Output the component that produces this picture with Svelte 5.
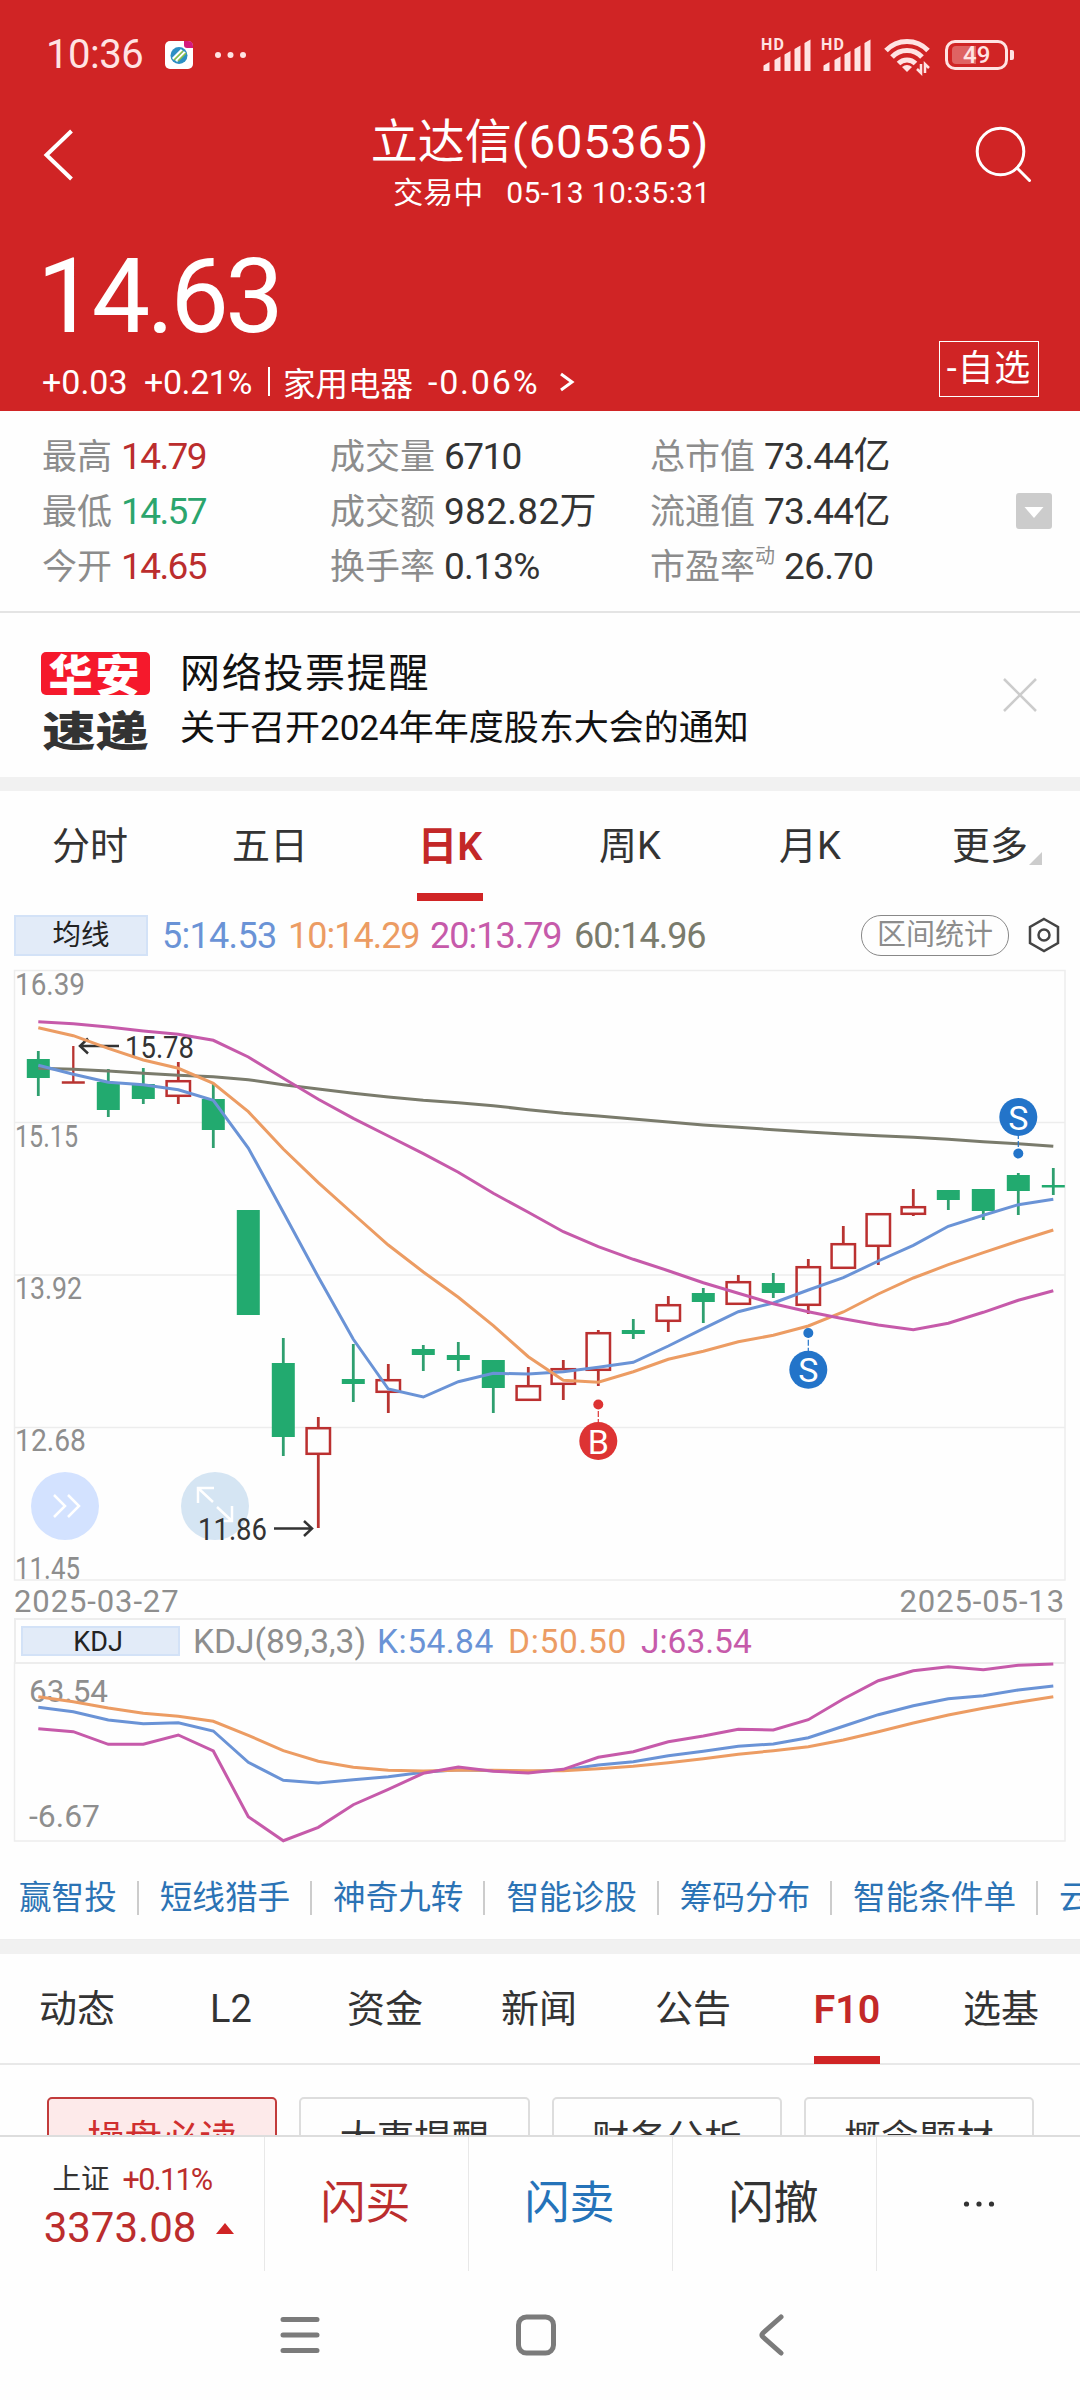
<script lang="ts">
	type Candle = [kind: 'up' | 'down', high: number, top: number, bottom: number, low: number];

	const STEP = 35;
	const FIRST = 38.3;
	const x = (i: number) => FIRST + i * STEP;

	const stats = [
		[
			{ label: '最高', value: '14.79', tone: 'red' },
			{ label: '最低', value: '14.57', tone: 'green' },
			{ label: '今开', value: '14.65', tone: 'red' }
		],
		[
			{ label: '成交量', value: '6710', tone: 'tight' },
			{ label: '成交额', value: '982.82万', tone: 'loose' },
			{ label: '换手率', value: '0.13%' }
		],
		[
			{ label: '总市值', value: '73.44亿' },
			{ label: '流通值', value: '73.44亿' },
			{ label: '市盈率', sup: '动', value: '26.70' }
		]
	];

	const periods = ['分时', '五日', '日K', '周K', '月K', '更多'];
	const tools = ['赢智投', '短线猎手', '神奇九转', '智能诊股', '筹码分布', '智能条件单', '云'];
	const sections = ['动态', 'L2', '资金', '新闻', '公告', 'F10', '选基'];
	const chips = ['操盘必读', '大事提醒', '财务分析', '概念题材'];

	const candles: Candle[] = [
		['down', 1051, 1059, 1078, 1096],
		['up', 1046, 1081, 1083.5, 1083],
		['down', 1069, 1082, 1110, 1117],
		['down', 1068, 1084, 1099, 1104],
		['up', 1062, 1080, 1097, 1104],
		['down', 1083, 1099, 1130, 1148],
		['down', 1210, 1210, 1315, 1315],
		['down', 1338, 1363, 1437, 1456],
		['up', 1417, 1427, 1455, 1528],
		['down', 1344, 1379, 1384, 1402],
		['up', 1364, 1379, 1393, 1413],
		['down', 1345, 1349, 1355, 1371],
		['down', 1342, 1355, 1360, 1371],
		['down', 1360, 1360, 1388, 1413],
		['up', 1367, 1385, 1401, 1401],
		['up', 1360, 1368, 1385, 1400],
		['up', 1330, 1332, 1371, 1386],
		['down', 1319, 1330, 1334, 1339],
		['up', 1296, 1304, 1322, 1332],
		['down', 1288, 1293, 1302, 1323],
		['up', 1275, 1281, 1305, 1305],
		['down', 1273, 1283, 1293, 1298],
		['up', 1259, 1266, 1306, 1314],
		['up', 1226, 1243, 1269, 1269],
		['up', 1213, 1213, 1247, 1265],
		['up', 1189, 1206, 1215, 1216],
		['down', 1190, 1190, 1200, 1210],
		['down', 1189, 1189, 1211, 1220],
		['down', 1173, 1175, 1191, 1215],
		['down', 1168, 1185, 1187.5, 1195]
	];

	const averages = [
		{
			color: '#7a7b6c',
			ys: [1068.3, 1069.3, 1071, 1073.3, 1075.3, 1076.7, 1079.7, 1084.7, 1089, 1093.3, 1097, 1100.3, 1102.7, 1105.7, 1109.7, 1113.3, 1116, 1119, 1122, 1125, 1127.3, 1129.7, 1132, 1134, 1135.7, 1137.3, 1139.3, 1141.7, 1143.7, 1146.3]
		},
		{
			color: '#6a93d6',
			ys: [1065.3, 1074.3, 1082.3, 1084.7, 1089.7, 1100.3, 1148, 1212.3, 1277, 1339.3, 1389, 1397, 1381.7, 1373.3, 1374, 1371.7, 1367.3, 1362.3, 1346, 1328.7, 1311.7, 1303, 1290, 1277.7, 1261, 1245.3, 1226.3, 1215.3, 1204.7, 1199.3]
		},
		{
			color: '#ec9c63',
			ys: [1027.7, 1035.7, 1048.3, 1060, 1068.3, 1083.3, 1111.7, 1149, 1182.7, 1214, 1245, 1272, 1297.3, 1325.7, 1356.7, 1380.3, 1382.3, 1371.7, 1359.3, 1351.3, 1341.7, 1335.3, 1326, 1312, 1294, 1278, 1264.7, 1252.7, 1241, 1230]
		},
		{
			color: '#c65aaa',
			ys: [1021.7, 1023.7, 1027, 1031, 1034.3, 1040.3, 1057, 1078.3, 1099.3, 1118.3, 1136, 1153.7, 1172.3, 1193.3, 1212.3, 1231.7, 1246.7, 1259.3, 1270.7, 1282.7, 1293.3, 1303.7, 1311.7, 1318.7, 1325, 1329.7, 1323.3, 1312.3, 1300.3, 1290.7]
		}
	];

	const kdj = [
		{
			color: '#6a93d6',
			ys: [1707.3, 1711.7, 1720, 1723.7, 1722.7, 1731, 1762.3, 1780.3, 1783, 1779.7, 1776.7, 1772.3, 1769.7, 1770.7, 1771.7, 1770, 1765, 1761.7, 1755.7, 1751.3, 1746.3, 1744, 1737.7, 1726.3, 1714.7, 1705.7, 1698.7, 1695.7, 1690, 1686]
		},
		{
			color: '#ec9c63',
			ys: [1696.7, 1701.7, 1708, 1713.3, 1716.3, 1721.3, 1735.3, 1750.7, 1761.3, 1767.3, 1770.3, 1771, 1770.3, 1770.3, 1770.7, 1770.7, 1768.7, 1766.3, 1762.7, 1758.7, 1754.3, 1750.7, 1746.7, 1740, 1731.7, 1723, 1715, 1708.3, 1702.3, 1696.7]
		},
		{
			color: '#c65aaa',
			ys: [1728.7, 1731.7, 1744.3, 1744.3, 1735, 1751, 1816.7, 1840.7, 1827.3, 1804.7, 1789.3, 1773.3, 1767, 1771.3, 1773, 1769.3, 1757.3, 1751.7, 1741.7, 1736, 1729.3, 1730, 1719.7, 1699, 1680.7, 1670.7, 1666.7, 1669.7, 1665.3, 1664]
		}
	];

	const prices: [string, number, number][] = [
		['16.39', 995, 70],
		['15.15', 1147, 63],
		['13.92', 1299, 67],
		['12.68', 1451, 71],
		['11.45', 1578.5, 65]
	];

	const marks = [
		{ letter: 'S', i: 28, y: 1117, dot: 1153.5, color: '#2374c9' },
		{ letter: 'S', i: 22, y: 1369.7, dot: 1333, color: '#2374c9' },
		{ letter: 'B', i: 16, y: 1441, dot: 1404.5, color: '#dd3333' }
	];

	const points = (ys: number[]) => ys.map((y, i) => `${x(i)},${y}`).join(' ');
</script>

<div class="page">
	<div class="scroll">
		<header class="hero">
			<div class="status">
				<span class="clock">10:36</span>
				<svg class="app-icon" viewBox="0 0 28 28" width="28" height="28">
					<rect width="28" height="28" rx="5" fill="#fff" />
					<circle cx="14" cy="14.500" r="8.500" fill="#2d8fc4" />
					<path d="M8 18l9-9M11 20l9-9" stroke="#fff" stroke-width="3" />
					<path d="M9 19l9-9M13 20l8-8" stroke="#8cc04a" stroke-width="1.600" />
					<path d="M19 0h4q5 0 5 5v2h-6q-3 0-3-3z" fill="#d6197c" />
				</svg>
				<svg class="more-dots" viewBox="0 0 34 8" width="34" height="8" fill="#ffe3e3">
					<circle cx="4" cy="4" r="3" /><circle cx="16.500" cy="4" r="3" /><circle cx="29" cy="4" r="3" />
				</svg>
				<div class="signals">
					{#each [0, 1] as sim (sim)}
						<svg viewBox="0 0 50 36" width="50" height="36" fill="#ffe3e3">
							<text x="0" y="13" class="hd" textLength="23">HD</text>
							<path d="M2.500 28.500l6-3.500v9h-6zM13.500 23l6-3.500v14.500h-6zM23.500 17.500l6-3.500v20h-6zM33.500 12l6-3.500v25.500h-6zM43.500 6l6-3.500v31.500h-6z" />
						</svg>
					{/each}
				</div>
				<svg class="wifi" viewBox="0 0 46 36" width="46" height="36" fill="none" stroke="#ffe3e3" stroke-width="5">
					<path d="M2 13.500A29 29 0 0 1 44 13.500" />
					<path d="M8 20A20.500 20.500 0 0 1 38 20" />
					<path d="M14.500 26.500A12 12 0 0 1 31.500 26.500" />
					<path d="M18 30q5-4 10 0l-5 5z" fill="#ffe3e3" stroke="none" />
					<path d="M37 27v9l-4-4M41 36v-9l4 4" stroke-width="2.500" />
				</svg>
				<div class="battery"><span class="level"></span><span class="percent">49</span></div>
				<span class="nub"></span>
			</div>

			<div class="title-bar">
				<svg viewBox="0 0 31 52" width="31" height="52" fill="none" stroke="#fff" stroke-width="4">
					<path d="M28.500 2L3.500 26l25 24" />
				</svg>
				<div class="titles">
					<h1>立达信<span>(605365)</span></h1>
					<p><span>交易中</span><span>05-13 10:35:31</span></p>
				</div>
				<svg viewBox="0 0 58 58" width="58" height="58" fill="none" stroke="#fff" stroke-width="3">
					<circle cx="25.500" cy="25.500" r="23.300" /><path d="M42 42l12.500 12.500" stroke-linecap="round" />
				</svg>
			</div>

			<div class="price">14.63</div>
			<div class="change">
				<span class="c1">+0.03</span>
				<span class="c2">+0.21%</span>
				<i></i>
				<span class="c3">家用电器</span>
				<span class="c4">-0.06%</span>
				<svg viewBox="0 0 16 20" width="16" height="20" fill="none" stroke="#fff" stroke-width="3"><path d="M2 2l11 8-11 8" /></svg>
				<button class="fav">-自选</button>
			</div>
		</header>

		<section class="stats">
			{#each stats as column}
				<dl>
					{#each column as item}
						<div>
							<dt>{item.label}{#if item.sup}<sup>{item.sup}</sup>{/if}</dt>
							<dd class={item.tone}>{item.value}</dd>
						</div>
					{/each}
				</dl>
			{/each}
			<svg viewBox="0 0 36 36" width="36" height="36">
				<rect width="36" height="36" rx="3" fill="#ccc" />
				<path d="M8.500 14h19L18 25z" fill="#fff" />
			</svg>
		</section>

		<section class="notice">
			<div class="brand"><b>华安</b><em>速递</em></div>
			<div class="message">
				<strong>网络投票提醒</strong>
				<span>关于召开2024年年度股东大会的通知</span>
			</div>
			<svg viewBox="0 0 34 34" width="34" height="34" stroke="#ccc" stroke-width="2.500"><path d="M1 1l32 32M33 1L1 33" /></svg>
		</section>

		<div class="band"></div>

		<nav class="periods">
			{#each periods as period, i (period)}
				<span class:active={i === 2} class:more={i === 5}>{period}</span>
			{/each}
		</nav>

		<div class="ma-row">
			<span class="tag">均线</span>
			<span class="ma blue">5:14.53</span>
			<span class="ma orange">10:14.29</span>
			<span class="ma pink">20:13.79</span>
			<span class="ma olive">60:14.96</span>
			<span class="pill">区间统计</span>
			<svg viewBox="0 0 32 36" width="32" height="36" fill="none" stroke="#444" stroke-width="2.500">
				<path d="M16 2l14 8v16l-14 8-14-8V10z" /><circle cx="16" cy="18" r="5.500" />
			</svg>
		</div>

		<svg class="chart" viewBox="0 960 1080 622" width="1080" height="622">
			<g fill="none" stroke="#ededed" stroke-width="1.500">
				<rect x="14.500" y="970.500" width="1050.500" height="609.500" />
				<path d="M14 1122.500H1065M14 1275H1065M14 1427.500H1065" />
			</g>
			<circle cx="65" cy="1506" r="34" fill="#d3e2ff" />
			<path d="M54 1495l11 11-11 11M68 1495l11 11-11 11" fill="none" stroke="#fff" stroke-width="2.500" />
			<circle cx="215" cy="1506" r="34" fill="#d5e5f3" />
			<path d="M213 1502l-15-14M198 1503v-15h16M217 1507l15 14M232 1506v15h-16" fill="none" stroke="#fff" stroke-width="2.500" />

			{#each prices as [label, y, width] (label)}
				<text class="axis" x="15" {y} textLength={width} lengthAdjust="spacingAndGlyphs">{label}</text>
			{/each}

			{#each candles as [kind, high, top, bottom, low], i (i)}
				{#if kind === 'down'}
					<path d="M{x(i)} {high}V{low}" stroke="#2f9f6f" stroke-width="2.800" />
					<rect x={x(i) - 11.5} y={top} width="23" height={bottom - top} fill="#22aa6f" />
				{:else if bottom - top < 4}
					<path d="M{x(i)} {high}V{low}M{x(i) - 11.5} 1082.500h23" stroke="#b83431" stroke-width="2.300" />
				{:else}
					<path d="M{x(i)} {high}V{top}M{x(i)} {bottom}V{low}" stroke="#b83431" stroke-width="2.800" />
					<rect x={x(i) - 11.7} y={top + 1.2} width="23.400" height={bottom - top - 2.4} fill="none" stroke="#bb3030" stroke-width="2.500" />
				{/if}
			{/each}

			<g fill="none" stroke="#333" stroke-width="2.500">
				<path d="M119 1046H80M88 1038.500l-8 7.500 8 7.500" />
				<path d="M274 1528.500h38M304 1521l8 7.500-8 7.500" />
			</g>
			<text class="extreme" x="125" y="1057.500" textLength="69" lengthAdjust="spacingAndGlyphs">15.78</text>
			<text class="extreme" x="198" y="1539.500" textLength="69" lengthAdjust="spacingAndGlyphs">11.86</text>

			{#each averages as line (line.color)}
				<polyline points={points(line.ys)} fill="none" stroke={line.color} stroke-width="3" />
			{/each}

			{#each marks as mark (mark.i)}
				<path d="M{x(mark.i)} {mark.y}V{mark.dot}" stroke={mark.color} stroke-width="1.200" stroke-dasharray="6 2" />
				<circle cx={x(mark.i)} cy={mark.dot} r="5" fill={mark.color} />
				<circle cx={x(mark.i)} cy={mark.y} r="19" fill={mark.color} />
				<text class="mark" x={x(mark.i)} y={mark.y + 12.5}>{mark.letter}</text>
			{/each}
		</svg>

		<div class="dates"><span>2025-03-27</span><span>2025-05-13</span></div>

		<div class="kdj-head">
			<span class="tag">KDJ</span>
			<span class="k0">KDJ(89,3,3)</span>
			<span class="k1 blue">K:54.84</span>
			<span class="k2 orange">D:50.50</span>
			<span class="k3 pink">J:63.54</span>
		</div>
		<svg class="chart" viewBox="0 1662 1080 182" width="1080" height="182">
			<path d="M14.500 1662V1841H1065V1662" fill="none" stroke="#ededed" stroke-width="1.500" />
			<text class="axis" x="29" y="1701.500" textLength="79" lengthAdjust="spacingAndGlyphs">63.54</text>
			<text class="axis" x="29" y="1826.500" textLength="71" lengthAdjust="spacingAndGlyphs">-6.67</text>
			{#each kdj as line (line.color)}
				<polyline points={points(line.ys)} fill="none" stroke={line.color} stroke-width="3" />
			{/each}
		</svg>

		<nav class="tools">
			{#each tools as tool (tool)}
				<a href="#{tool}">{tool}</a>
			{/each}
		</nav>

		<div class="band"></div>

		<nav class="sections">
			{#each sections as section (section)}
				<span class:active={section === 'F10'}>{section}</span>
			{/each}
		</nav>

		<div class="chips">
			{#each chips as chip, i (chip)}
				<span class:on={i === 0}>{chip}</span>
			{/each}
		</div>
	</div>

	<footer class="trade">
		<div class="index">
			<p><span>上证</span><span class="red">+0.11%</span></p>
			<p class="points">3373.08<i></i></p>
		</div>
		<span class="red">闪买</span>
		<span class="sell">闪卖</span>
		<span>闪撤</span>
		<span>
			<svg viewBox="0 0 32 6" width="32" height="6" fill="#333"><circle cx="3.500" cy="3" r="2.600" /><circle cx="16" cy="3" r="2.600" /><circle cx="28.500" cy="3" r="2.600" /></svg>
		</span>
	</footer>

	<div class="system-nav">
		<svg viewBox="0 0 40 44" width="40" height="44" fill="none" stroke="#7b7b7b" stroke-width="5" stroke-linecap="round">
			<path d="M3 6.500h34M3 22h34M3 37.500h34" />
		</svg>
		<svg viewBox="0 0 44 44" width="44" height="44" fill="none" stroke="#7b7b7b" stroke-width="5">
			<rect x="4.500" y="4" width="35" height="36" rx="8" />
		</svg>
		<svg viewBox="0 0 30 44" width="30" height="44" fill="none" stroke="#7b7b7b" stroke-width="5" stroke-linecap="round" stroke-linejoin="round">
			<path d="M24 4L6 20q-2 2 0 4l18 16" />
		</svg>
	</div>
</div>

<style>
	:global(body) {
		margin: 0;
		background: #fefefe;
	}

	.page {
		width: 1080px;
		height: 2400px;
		display: flex;
		flex-direction: column;
		overflow: hidden;
		background: #fefefe;
		color: #333;
		font-family: Roboto, 'Noto Sans CJK SC', sans-serif;
	}

	.page * {
		box-sizing: border-box;
	}

	p,
	h1,
	dl,
	dd {
		margin: 0;
	}

	svg {
		display: block;
		flex: none;
		overflow: visible;
	}

	span {
		white-space: nowrap;
	}

	.red {
		color: #bb2d2d;
	}

	.green {
		color: #2ba56d;
	}

	.blue {
		color: #6a93d6;
	}

	.orange {
		color: #ec9c63;
	}

	.pink {
		color: #c65aaa;
	}

	.olive {
		color: #7a7b6c;
	}

	.scroll {
		height: 2135px;
		overflow: hidden;
	}

	/* header */
	.hero {
		height: 411px;
		background: #d02425;
		color: #fff;
	}

	.status {
		display: flex;
		align-items: center;
		height: 109px;
		padding: 0 66px 0 46px;
		color: #ffe3e3;
	}

	.clock {
		width: 119px;
		font-size: 40px;
		letter-spacing: -0.5px;
	}

	.more-dots {
		margin-left: 21px;
	}

	.signals {
		display: flex;
		gap: 10px;
		margin-left: auto;
	}

	.hd {
		font-size: 16px;
		font-weight: 700;
	}

	.wifi {
		margin-left: 13px;
	}

	.battery {
		display: flex;
		align-items: center;
		width: 63px;
		height: 30px;
		margin-left: 15px;
		padding: 4px;
		border: 3px solid #ffe3e3;
		border-radius: 10px;
	}

	.level {
		width: 24px;
		height: 18px;
		border-radius: 4px 0 0 4px;
		background: #df6363;
	}

	.percent {
		margin-left: -13px;
		font-size: 24px;
		font-weight: 500;
		line-height: 20px;
	}

	.nub {
		width: 4px;
		height: 10px;
		margin: 0 0 0 2px;
		border-radius: 0 2px 2px 0;
		background: #ffe3e3;
	}

	.title-bar {
		display: flex;
		justify-content: space-between;
		height: 131px;
		padding: 17px 47px 0 43px;
	}

	.title-bar > svg:first-child {
		margin-top: 3px;
	}

	.titles {
		flex: 1;
		margin-left: 28px;
		text-align: center;
	}

	h1 {
		margin-top: -17px;
		padding-left: 3px;
		font-size: 47px;
		font-weight: 400;
		line-height: 66px;
	}

	h1 span {
		letter-spacing: 0.8px;
	}

	.titles p {
		display: flex;
		justify-content: center;
		gap: 23px;
		padding-left: 27px;
		font-size: 30px;
		line-height: 36px;
	}

	.titles p span:last-child {
		letter-spacing: 0.4px;
	}

	.price {
		height: 110px;
		padding-left: 37px;
		font-size: 104px;
		letter-spacing: -3.6px;
		line-height: 113px;
	}

	.change {
		display: flex;
		align-items: center;
		height: 61px;
		padding: 2px 41px 0 42px;
		font-size: 34px;
	}

	.c1 {
		width: 102px;
	}

	.c2 {
		width: 124px;
		letter-spacing: -0.4px;
	}

	.change i {
		width: 2px;
		height: 29px;
		background: #fff;
	}

	.c3 {
		width: 145px;
		margin-left: 13px;
		font-size: 32.5px;
	}

	.c4 {
		width: 131px;
		letter-spacing: 1.8px;
	}

	.fav {
		width: 100px;
		height: 56px;
		margin: -26px 0 0 auto;
		padding: 0;
		border: 1.5px solid #fff;
		background: none;
		color: #fff;
		font: 36px Roboto, 'Noto Sans CJK SC', sans-serif;
		letter-spacing: 0.8px;
		line-height: 50px;
	}

	/* quote figures */
	.stats {
		display: grid;
		grid-template-columns: 288px 320px 366px 36px;
		height: 202px;
		padding: 18px 28px 0 42px;
		border-bottom: 2px solid #e4e4e4;
	}

	.stats > svg {
		margin-top: 64px;
	}

	.stats dl > div {
		display: flex;
		align-items: baseline;
		height: 55px;
		gap: 9px;
		font-size: 37px;
		line-height: 55px;
		white-space: nowrap;
	}

	.stats dt {
		color: #8c8c8c;
		font-size: 35px;
	}

	.stats dd {
		letter-spacing: -0.7px;
	}

	.stats .red,
	.stats .green,
	.stats .tight {
		letter-spacing: -1.6px;
	}

	.stats .loose {
		letter-spacing: 0.3px;
	}

	.stats sup {
		font-size: 20px;
		line-height: 0;
		vertical-align: 16px;
	}

	/* notice */
	.notice {
		display: flex;
		align-items: center;
		height: 164px;
		padding: 0 43px 0 41px;
		color: #111;
	}

	.brand {
		display: flex;
		flex-direction: column;
		align-items: center;
		width: 109px;
		height: 100px;
		margin-top: 14px;
		font-family: 'Noto Sans CJK SC', sans-serif;
		font-weight: 900;
	}

	.brand b {
		width: 109px;
		height: 45px;
		border-radius: 5px;
		background: #f5192c;
		color: #fff;
		font-size: 44px;
		font-weight: 900;
		letter-spacing: 3px;
		line-height: 42px;
		text-align: center;
	}

	.brand em {
		height: 50px;
		margin-top: 9px;
		color: #333;
		font-size: 53px;
		font-style: normal;
		line-height: 48px;
		transform: scaleY(0.78);
	}

	.message {
		display: flex;
		flex-direction: column;
		flex: 1;
		margin: 14px 0 0 30px;
	}

	.message strong {
		font-size: 40px;
		font-weight: 400;
		letter-spacing: 1.7px;
		line-height: 52px;
	}

	.message span {
		font-size: 35px;
		line-height: 57px;
	}

	.band {
		height: 14px;
		background: #f1f1f1;
	}

	/* tabs */
	.periods,
	.sections {
		display: grid;
		grid-auto-flow: column;
		grid-auto-columns: 1fr;
		justify-items: center;
		height: 110px;
		font-size: 38px;
		line-height: 111px;
	}

	.periods .active,
	.sections .active {
		width: 66px;
		height: 110px;
		border-bottom: 8px solid #d02425;
		color: #c32828;
		font-size: 39.5px;
		font-weight: 600;
		display: flex;
		justify-content: center;
	}

	.more {
		display: flex;
		align-items: center;
	}

	.more::after {
		content: '';
		width: 0;
		height: 0;
		margin: 24px -14px 0 1px;
		border-left: 13px solid transparent;
		border-bottom: 13px solid #ccc;
	}

	.ma-row {
		display: flex;
		align-items: center;
		height: 59px;
		padding: 9px 20px 0 14px;
	}

	.ma {
		width: 142px;
		padding-top: 2px;
		font-size: 36px;
		letter-spacing: -1px;
	}

	.ma.blue {
		width: 126px;
		letter-spacing: -0.7px;
	}

	.ma.pink {
		width: 144px;
	}

	.tag {
		border: 2px solid #d3e2f7;
		background: #e2ebf8;
		color: #222;
		text-align: center;
	}

	.ma-row .tag {
		width: 134px;
		height: 41px;
		margin-right: 14px;
		font-size: 28.5px;
		line-height: 38px;
	}

	.pill {
		width: 148px;
		height: 41px;
		margin: 0 19px 0 auto;
		border: 1.5px solid #888;
		border-radius: 20px;
		color: #8c8c8c;
		font-size: 29px;
		line-height: 39px;
		text-align: center;
	}

	/* charts */
	.chart text {
		font-family: Roboto, sans-serif;
	}

	.axis {
		fill: #8e8e8e;
		font-size: 30.5px;
	}

	.extreme {
		fill: #333;
		font-size: 30.5px;
	}

	.mark {
		fill: #fff;
		font-size: 34px;
		text-anchor: middle;
	}

	.dates {
		display: flex;
		justify-content: space-between;
		height: 36px;
		padding: 0 15px 0 14px;
		color: #8e8e8e;
		font-size: 31px;
		line-height: 39px;
		letter-spacing: 0.9px;
	}

	.kdj-head {
		display: flex;
		align-items: center;
		height: 46px;
		margin: 0 14px;
		margin-bottom: -2px;
		padding-left: 7px;
		border: 2px solid #ededed;
		color: #8e8e8e;
		font-size: 33.5px;
	}

	.kdj-head .tag {
		width: 159px;
		height: 30px;
		margin-right: 13px;
		margin-left: -2px;
		padding-right: 5px;
		font-size: 27px;
		line-height: 29px;
	}

	.k0 {
		width: 184px;
	}

	.k1 {
		width: 131px;
		letter-spacing: 0.5px;
	}

	.k2 {
		width: 133px;
		letter-spacing: 0.7px;
	}

	.tools {
		display: flex;
		align-items: center;
		height: 96px;
		padding: 12px 0 0 19px;
		border-bottom: 1.5px solid #eee;
		overflow: hidden;
		font-size: 32.6px;
	}

	.tools a {
		flex: none;
		color: #2b73b5;
		line-height: 34px;
		text-decoration: none;
	}

	.tools a + a {
		margin-left: 20px;
		padding-left: 21px;
		border-left: 2px solid #ccc;
	}

	.sections {
		height: 111px;
		padding-right: 2px;
		border-bottom: 2px solid #e8e8e8;
	}

	.chips {
		display: flex;
		gap: 22px;
		padding: 32px 46px 0 47px;
	}

	.chips span {
		flex: 1;
		height: 80px;
		border: 2px solid #ddd;
		border-radius: 5px;
		font-size: 37.5px;
		line-height: 80px;
		text-align: center;
	}

	.chips .on {
		border-color: #c23b3b;
		background: #fdeaea;
		color: #d02f2f;
	}

	/* bottom bars */
	.trade {
		display: grid;
		grid-template-columns: 264px 204px 204px 204px 1fr;
		height: 135px;
		border-top: 2px solid #ddd;
		font-size: 45px;
		line-height: 134px;
		text-align: center;
	}

	.trade > * + * {
		padding-right: 2px;
		border-left: 1.5px solid #e8e8e8;
	}

	.trade > span:last-child {
		display: flex;
		align-items: center;
		justify-content: center;
		padding-right: 0;
	}

	.sell {
		color: #2573b9;
	}

	.index {
		padding-top: 22px;
	}

	.index p {
		display: flex;
		justify-content: center;
		gap: 13px;
		font-size: 28.5px;
		line-height: 42px;
	}

	.index p span:last-child {
		font-size: 30.5px;
		letter-spacing: -1.7px;
	}

	.index .points {
		align-items: center;
		gap: 20px;
		padding-left: 14px;
		color: #bb2d2d;
		font-size: 42px;
		line-height: 54px;
	}

	.points i {
		border: 9px solid transparent;
		border-top: 0;
		border-bottom: 11px solid #d02425;
	}

	.system-nav {
		display: grid;
		grid-template-columns: repeat(3, 236px);
		justify-content: center;
		justify-items: center;
		padding: 43px 9px 0 0;
	}
</style>
